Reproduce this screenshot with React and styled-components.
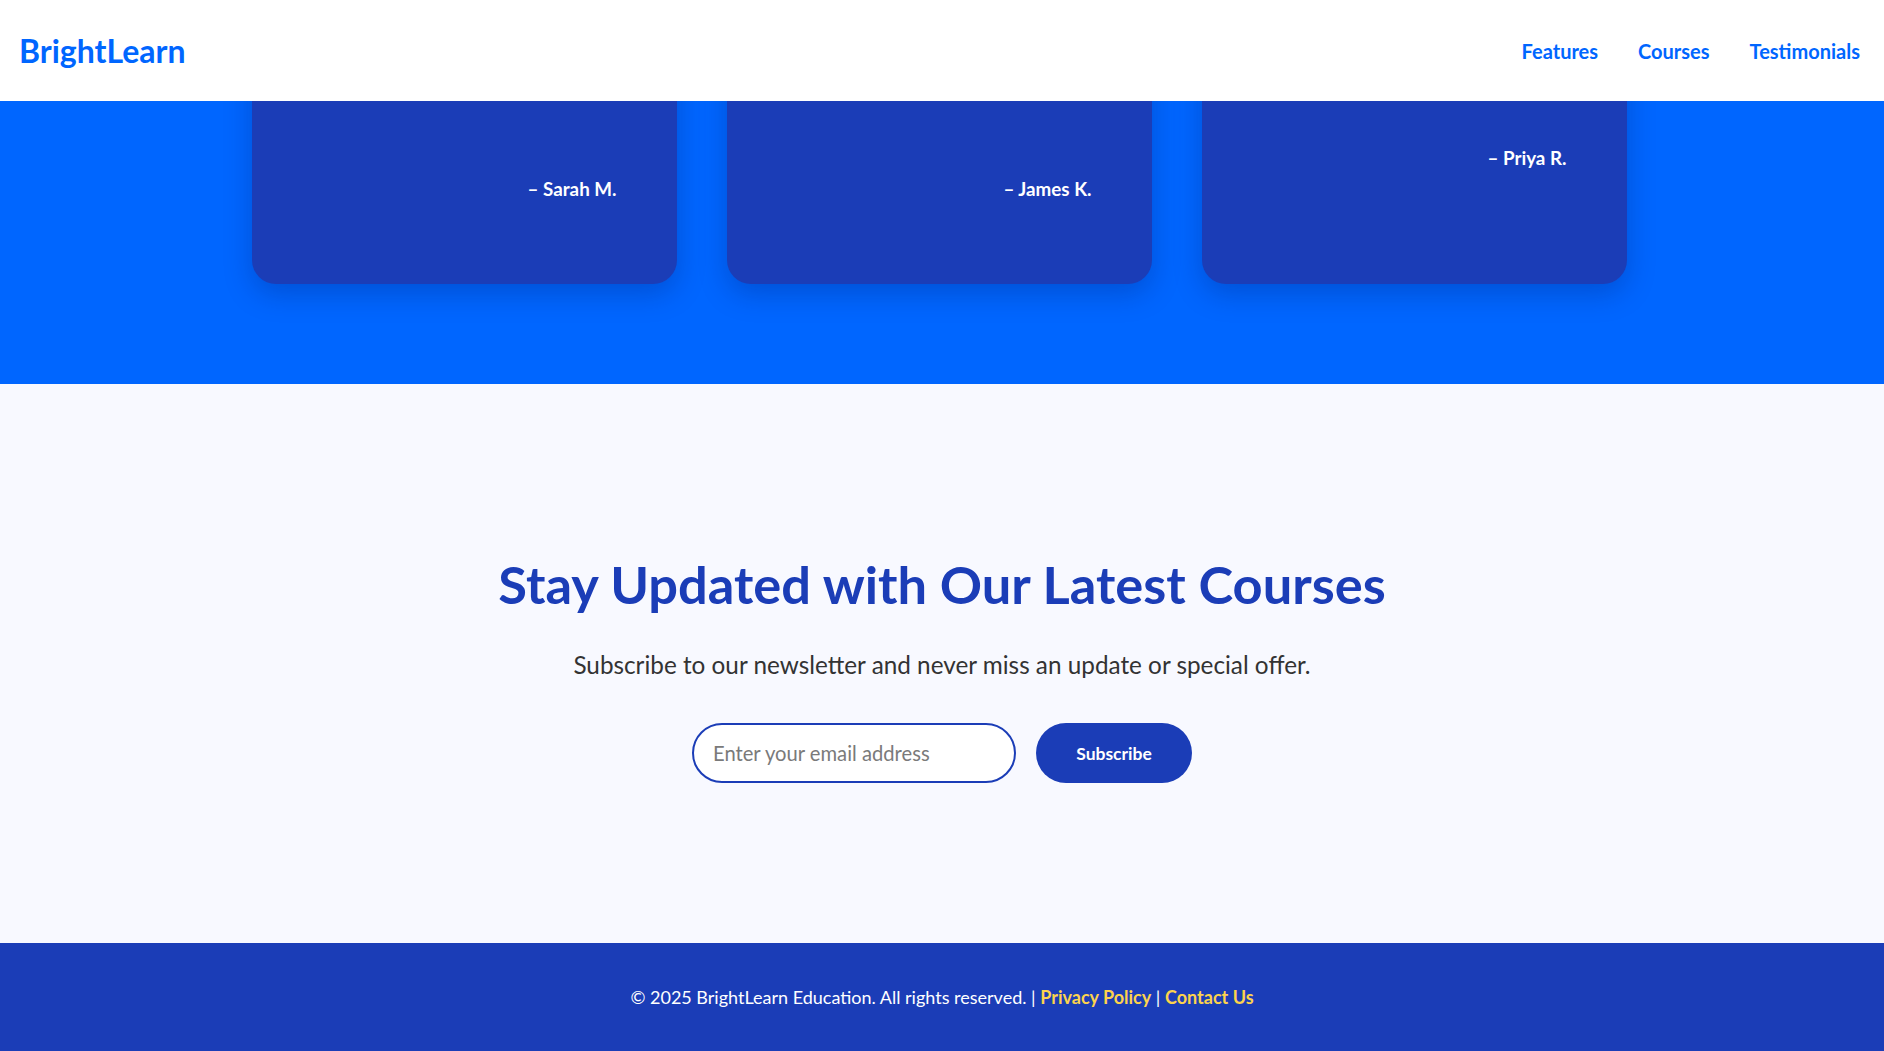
import React, { useLayoutEffect } from 'react'
import styled, { createGlobalStyle } from 'styled-components'

const GlobalStyle = createGlobalStyle`
  * {
    box-sizing: border-box;
  }
  html {
    scroll-behavior: auto;
  }
  body {
    margin: 0;
    font-family: Lato, "Noto Sans", sans-serif;
    color: #333;
    background: #f8f9ff;
  }
`

const Header = styled.header`
  position: fixed;
  top: 0;
  left: 0;
  right: 0;
  z-index: 10;
  height: 101px;
  display: flex;
  align-items: center;
  justify-content: space-between;
  padding: 0 24px 0 19px;
  background: #fff;
`

const Logo = styled.a`
  font-size: 32px;
  font-weight: 700;
  color: #0066ff;
  text-decoration: none;
`

const Nav = styled.nav`
  display: flex;
  gap: 40px;
`

const NavLink = styled.a`
  font-size: 20px;
  font-weight: 700;
  color: #0066ff;
  text-decoration: none;
`

const Testimonials = styled.section`
  background: #0066ff;
  color: #fff;
  padding: 120px 0 100px;
`

const CardGrid = styled.div`
  display: grid;
  grid-template-columns: repeat(3, 425px);
  gap: 50px;
  justify-content: center;
  padding-right: 6px;
`

const Card = styled.div`
  background: #1b3db7;
  border-radius: 24px;
  padding: 40px 60px 82px 40px;
  box-shadow: 0 10px 28px rgba(0, 20, 90, 0.25);
`

const Quote = styled.p`
  margin: 0 0 72px;
  font-size: 18px;
  font-style: italic;
  line-height: 31px;
`

const Author = styled.p`
  margin: 0;
  text-align: right;
  font-size: 18.8px;
  font-weight: 700;
  line-height: 27px;
`

const Newsletter = styled.section`
  padding: 168px 24px 160px;
  text-align: center;
  background: #f8f9ff;
`

const Title = styled.h2`
  margin: 0;
  font-size: 52.4px;
  line-height: 64px;
  font-weight: 700;
  color: #1b3db7;
`

const Lead = styled.p`
  margin: 31px 0 41px;
  font-size: 24.3px;
  line-height: 35px;
  color: #333;
`

const Form = styled.form`
  display: flex;
  justify-content: center;
  gap: 20px;
`

const EmailInput = styled.input`
  width: 324px;
  height: 60px;
  padding: 0 19px;
  border: 2px solid #1b3db7;
  border-radius: 30px;
  background: #fff;
  font-family: inherit;
  font-size: 20.2px;
  color: #333;
  outline: none;

  &::placeholder {
    color: #7a7a7a;
  }
`

const SubscribeButton = styled.button`
  width: 156px;
  height: 60px;
  border: none;
  border-radius: 30px;
  background: #1b3db7;
  color: #fff;
  font-family: inherit;
  font-size: 17.5px;
  font-weight: 700;
  cursor: pointer;
`

const Footer = styled.footer`
  padding: 40px 24px 39px;
  background: #1b3db7;
  color: #fff;
  text-align: center;
  font-size: 18px;
  line-height: 28.8px;
`

const FooterLink = styled.a`
  color: #fcd34d;
  font-weight: 700;
  text-decoration: none;
`

const testimonials = [
  {
    quote: 'BrightLearn made learning fun and flexible. I finished my certificate while at work, on a full-time contract!',
    name: 'Sarah M.',
  },
  {
    quote: 'The instructors are amazing and every course is so well structured. I recommend it to anyone, really.',
    name: 'James K.',
  },
  {
    quote: 'I landed my dream job thanks to the skills I gained here. Life-changing!',
    name: 'Priya R.',
  },
]

export default function App() {
  useLayoutEffect(() => {
    window.scrollTo(0, document.documentElement.scrollHeight)
    requestAnimationFrame(() => window.scrollTo(0, document.documentElement.scrollHeight))
  }, [])

  return (
    <>
      <GlobalStyle />
      <Header>
        <Logo href="#">BrightLearn</Logo>
        <Nav>
          <NavLink href="#features">Features</NavLink>
          <NavLink href="#courses">Courses</NavLink>
          <NavLink href="#testimonials">Testimonials</NavLink>
        </Nav>
      </Header>

      <Testimonials id="testimonials">
        <CardGrid>
          {testimonials.map((t) => (
            <Card key={t.name}>
              <Quote>“{t.quote}”</Quote>
              <Author>– {t.name}</Author>
            </Card>
          ))}
        </CardGrid>
      </Testimonials>

      <Newsletter>
        <Title>Stay Updated with Our Latest Courses</Title>
        <Lead>Subscribe to our newsletter and never miss an update or special offer.</Lead>
        <Form onSubmit={(e) => e.preventDefault()}>
          <EmailInput type="email" placeholder="Enter your email address" />
          <SubscribeButton type="submit">Subscribe</SubscribeButton>
        </Form>
      </Newsletter>

      <Footer>
        © 2025 BrightLearn Education. All rights reserved. | <FooterLink href="#">Privacy Policy</FooterLink> |{' '}
        <FooterLink href="#">Contact Us</FooterLink>
      </Footer>
    </>
  )
}
